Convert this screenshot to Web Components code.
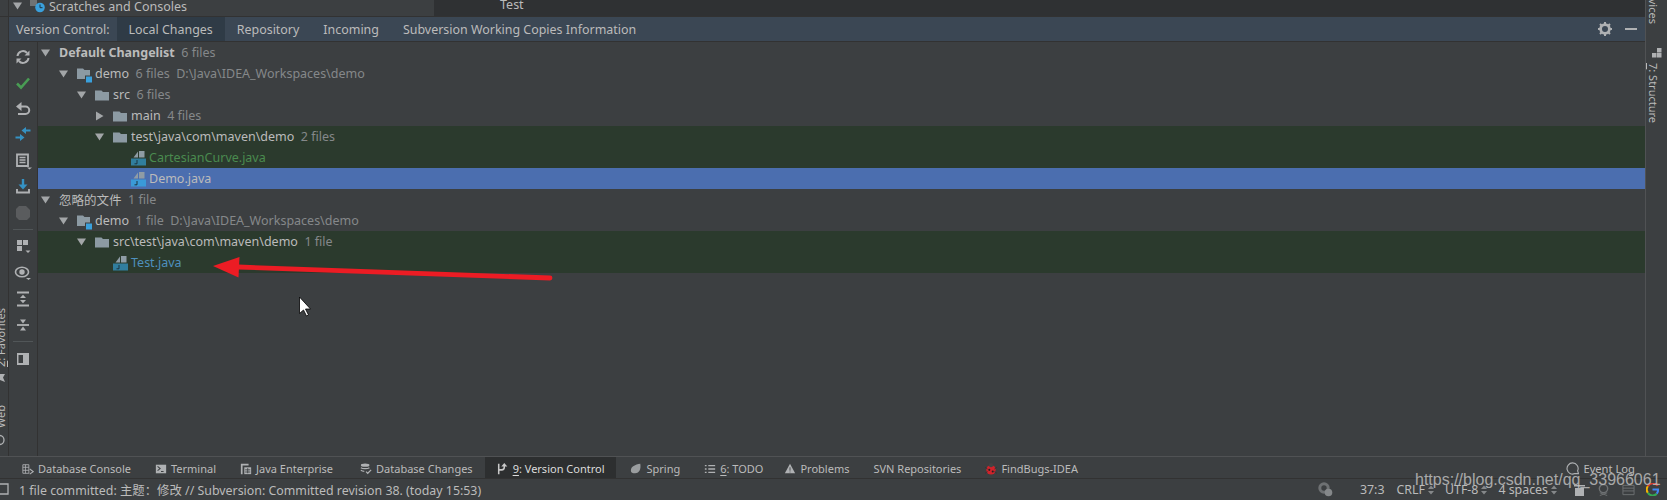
<!DOCTYPE html>
<html>
<head>
<meta charset="utf-8">
<style>
  html, body { margin: 0; padding: 0; background: #3c3f41; overflow: hidden; }
  body { width: 1667px; height: 500px; font-family: "Noto Sans", "Noto Sans CJK SC", sans-serif; font-size: 12.5px; color: #bbbbbb; }
</style>
</head>
<body>
<ide-window></ide-window>

<script>
// shared icon markup
const ICONS = {
  sync: '<path d="M2.500 7a5.500 5.500 0 0 1 9.600-3M13.500 9a5.500 5.500 0 0 1-9.600 3" fill="none" stroke="#afb1b3" stroke-width="2"/><path d="M14.500 1.500v5h-5zM1.500 14.500v-5h5z" fill="#afb1b3"/>',
  check: '<path d="M2 8.500l4 4 8-9" fill="none" stroke="#499c54" stroke-width="2.600"/>',
  undo: '<path d="M4 5.500h6.500a3.700 3.700 0 0 1 0 7.500H3" fill="none" stroke="#afb1b3" stroke-width="2"/><path d="M6.500 1v9L1 5.500z" fill="#afb1b3"/>',
  merge: '<path d="M15.500 3.500H10M.5 10.500H6" stroke="#3592c4" stroke-width="2.200" fill="none"/><path d="M11 0v7L6.500 3.500zM5 7v7l4.500-3.500z" fill="#3592c4"/>',
  comment: '<path d="M2 1.500h11v11.500H2z" fill="none" stroke="#afb1b3" stroke-width="1.800"/><path d="M4.500 4.500h6M4.500 7h6M4.500 9.500h6" stroke="#afb1b3" stroke-width="1.300"/><path d="M12 14.500h5l-2.500 2z" fill="#afb1b3"/>',
  shelve: '<path d="M8 0v7" stroke="#3592c4" stroke-width="2.400"/><path d="M3.500 5.500h9L8 10.500z" fill="#3592c4"/><path d="M2 10v3.500h12V10" fill="none" stroke="#afb1b3" stroke-width="1.900"/>',
  stop: '<path d="M4 1h7l4 4v7l-3 3H4l-3-3V4z" fill="#5a5c5e"/>',
  group: '<rect x="2" y="1" width="5" height="5" fill="#afb1b3"/><rect x="8" y="1" width="5" height="5" fill="#afb1b3"/><rect x="2" y="7" width="5" height="5" fill="#afb1b3"/><path d="M10.500 11.500h5l-2.500 2.500z" fill="#afb1b3"/>',
  eye: '<ellipse cx="7" cy="7" rx="6.500" ry="4.800" fill="none" stroke="#afb1b3" stroke-width="1.600"/><circle cx="7" cy="7" r="2.700" fill="#afb1b3"/><path d="M11 13h5l-2.500 2z" fill="#afb1b3"/>',
  expand: '<path d="M2 1.500h12M2 14.500h12" stroke="#afb1b3" stroke-width="1.800"/><path d="M8 3.800l3 3.200H5zM8 12.200L5 9h6z" fill="#afb1b3"/>',
  collapse: '<path d="M2 8h12" stroke="#afb1b3" stroke-width="1.800"/><path d="M8 6.500L5 2.500h6zM8 9.500l3 4H5z" fill="#afb1b3"/>',
  layout: '<rect x="2" y="2" width="12" height="12" fill="#afb1b3"/><rect x="3.500" y="4" width="4.500" height="8" fill="#3c3f41"/>'
};

const FOLDER = '<path d="M0 3.500h6.500L8 5h6v8.500H0z" fill="#8c9aa3"/>';

class ToolIcon extends HTMLElement {
  constructor() {
    super();
    this.attachShadow({mode: 'open'});
    const name = this.getAttribute('name');
    this.shadowRoot.innerHTML = `
      <style>
        :host { display: flex; width: 28px; height: 26px; align-items: center; justify-content: center; flex: none; }
        svg { width: 16px; height: 16px; overflow: visible; }
      </style>
      <svg viewBox="0 0 16 16">${ICONS[name]}</svg>`;
  }
}
customElements.define('tool-icon', ToolIcon);

// one row of the changes tree
class TreeRow extends HTMLElement {
  constructor() {
    super();
    this.attachShadow({mode: 'open'});
    const level = +this.getAttribute('level');
    const arrow = this.getAttribute('arrow');
    const icon = this.getAttribute('icon');
    let arrowSvg = '';
    if (arrow === 'down') arrowSvg = '<svg class="arrow" viewBox="0 0 10 10"><path d="M0 1.500h9L4.500 8.500z" fill="#a3a6a8"/></svg>';
    if (arrow === 'right') arrowSvg = '<svg class="arrow" viewBox="0 0 10 10"><path d="M1 .5v9L8.500 5z" fill="#a3a6a8"/></svg>';
    let iconSvg = '';
    if (icon === 'folder') iconSvg = `<svg class="icon" viewBox="0 0 16 16">${FOLDER}</svg>`;
    if (icon === 'module') iconSvg = `<svg class="icon" viewBox="0 0 16 16"><path d="M0 2.500h6L7.500 4H13v9H0z" fill="#8c9aa3"/><rect x="8" y="9.500" width="8" height="8" fill="#3c3f41"/><rect x="9" y="10.500" width="6" height="6" fill="#3aa0dc"/></svg>`;
    if (icon === 'java') iconSvg = `<svg class="icon" viewBox="0 0 16 16"><path d="M2.500 7.500L7 1.500v6z" fill="#8f9ca5"/><rect x="8" y="1" width="5.500" height="6.500" fill="#8f9ca5"/><rect x="0" y="8.500" width="15" height="7" fill="${this.getAttribute('tint')}"/><path d="M6 10v3.800H3.500" fill="none" stroke="#1d3440" stroke-width="1"/></svg>`;
    this.shadowRoot.innerHTML = `
      <style>
        :host { display: flex; height: 21px; align-items: center; white-space: pre; padding-left: ${level * 18 + 3}px; }
        :host([tone=green]) { background: #2b3a2d; }
        :host([tone=sel]) { background: #4b6eaf; }
        .slot { width: 18px; flex: none; display: flex; align-items: center; }
        .arrow { width: 10px; height: 10px; }
        .icon { width: 16px; height: 16px; flex: none; margin-right: 2px; overflow: visible; }
        .dim { color: #85888a; margin-left: 6.5px; }
        b { font-weight: 700; }
      </style>
      <span class="slot">${arrowSvg}</span>${iconSvg}<span class="name" style="color:${this.getAttribute('color') || 'inherit'}"><slot></slot></span><span class="dim">${this.getAttribute('info') || ''}</span><span class="dim">${this.getAttribute('path') || ''}</span>`;
  }
}
customElements.define('tree-row', TreeRow);

class ToolTab extends HTMLElement {
  constructor() {
    super();
    this.attachShadow({mode: 'open'});
    this.shadowRoot.innerHTML = `
      <style>
        :host { display: flex; align-items: center; gap: 4px; height: 100%; padding: 2px 12px 0; box-sizing: border-box; white-space: pre; font-size: 11px; flex: none; }
        :host([on]) { background: #2d2f30; color: #dcdcdc; }
        ::slotted(svg) { width: 12px; height: 12px; flex: none; }
        span { display: block; }
      </style>
      <slot name="icon"></slot><span><slot></slot></span>`;
  }
}
customElements.define('tool-tab', ToolTab);

class IdeWindow extends HTMLElement {
  constructor() {
    super();
    this.attachShadow({mode: 'open'});
    this.shadowRoot.innerHTML = `
      <style>
        :host { display: flex; flex-direction: column; width: 1667px; height: 500px; position: relative; overflow: hidden; background: #3c3f41; }
        * { box-sizing: border-box; }
        .upper { flex: 1; display: flex; min-height: 0; }
        .work { flex: 1; display: flex; flex-direction: column; min-width: 0; }
        .top { height: 17px; flex: none; display: flex; border-bottom: 1px solid #323232; overflow: hidden; }
        .top .edge { width: 9px; flex: none; border-right: 1px solid #323232; }
        .top .tree { width: 425px; flex: none; display: flex; align-items: center; padding: 0 0 4px 4px; white-space: pre; }
        .top .ed { flex: 1; background: #2f3133; padding-left: 66px; line-height: 10px; }
        .main { flex: 1; display: flex; min-height: 0; }
        .left { width: 9px; flex: none; border-right: 1px solid #323232; position: relative; overflow: hidden; }
        .right { width: 22px; flex: none; border-left: 1px solid #505254; position: relative; overflow: hidden; }
        .panel { flex: 1; display: flex; flex-direction: column; min-width: 0; }
        .tabs { height: 25px; flex: none; display: flex; align-items: center; background: #3b4754; border-bottom: 1px solid #323232; white-space: pre; font-size: 12.45px; }
        .tabs .title { padding: 0 7px 0 7px; }
        .tabs .tab { height: 100%; display: flex; align-items: center; padding: 0 12px; }
        .tabs .tab.on { background: #2f3b46; }
        .tabs .end { margin-left: auto; display: flex; align-items: center; gap: 13px; padding-right: 8px; }
        .body { flex: 1; display: flex; min-height: 0; }
        .bar { width: 29px; flex: none; border-right: 1px solid #323232; padding-top: 2px; display: flex; flex-direction: column; }
        .sep { height: 1px; margin: 3px 4px 4px; background: #515658; flex: none; }
        .tree-area { flex: 1; min-width: 0; }
        .bottom { height: 22px; flex: none; display: flex; align-items: center; border-top: 1px solid #505254; padding-left: 10px; }
        .bottom .end { margin-left: auto; padding: 2px 32px 0 0; display: flex; align-items: center; gap: 4px; font-size: 11.2px; }
        .status { height: 22px; flex: none; display: flex; align-items: center; border-top: 1px solid #323232; white-space: pre; font-size: 12.38px; }
        .status .end { margin-left: auto; display: flex; align-items: center; white-space: pre; }
        .status .spin { margin-left: 3px; width: 6px; height: 10px; flex: none; }
        .vtext { position: absolute; white-space: pre; transform-origin: 0 0; font-size: 11px; line-height: 17px; }
        .mark { position: absolute; color: #c4c4c4; font: 16px "Liberation Sans", sans-serif; white-space: pre; left: 1415px; top: 471px; opacity: .8; }
        .arrow-ann { position: absolute; left: 0; top: 0; pointer-events: none; }
        u { text-underline-offset: 2px; }
      </style>

      <div class="upper">
        <div class="work">
          <div class="top">
            <div class="edge"></div>
            <div class="tree">
              <svg width="10" height="10" viewBox="0 0 10 10" style="flex:none"><path d="M0 1.500h9L4.500 8.500z" fill="#a3a6a8"/></svg>
              <svg width="16" height="14" viewBox="0 0 16 14" style="margin-left:7px;flex:none"><path d="M0 0h7v7H0z" fill="#6f7375"/><circle cx="10" cy="8.500" r="4.800" fill="#3aa0dc"/><path d="M10 5.500v3.200h2.500" stroke="#1d3440" fill="none"/></svg>
              <span style="margin-left:3px">Scratches and Consoles</span>
            </div>
            <div class="ed">Test</div>
          </div>

          <div class="main">
            <div class="left">
              <span class="vtext" style="left:-8.500px;top:350px;transform:rotate(-90deg)"><u>2</u>: Favorites</span>
              <svg class="vtext" style="left:0;top:357px" width="6" height="11" viewBox="0 0 6 11"><path d="M-4 0H5L3 3.500 5 8 0 6l-4 3z" fill="#afb1b3"/></svg>
              <span class="vtext" style="left:-8.500px;top:411px;transform:rotate(-90deg)">Web</span>
              <svg class="vtext" style="left:0;top:417px" width="6" height="12" viewBox="0 0 6 12"><circle cx="-.5" cy="6" r="4.500" fill="none" stroke="#afb1b3" stroke-width="1.300"/></svg>
            </div>
            <div class="panel">
              <div class="tabs">
                <span class="title">Version Control:</span>
                <span class="tab on">Local Changes</span>
                <span class="tab">Repository</span>
                <span class="tab">Incoming</span>
                <span class="tab">Subversion Working Copies Information</span>
                <span class="end">
                  <svg width="14" height="14" viewBox="0 0 14 14"><circle cx="7" cy="7" r="4.400" fill="none" stroke="#afb1b3" stroke-width="2.800"/><path d="M7 0v2.500M7 11.500V14M0 7h2.500M11.500 7H14M2 2l2 2M10 10l2 2M12 2l-2 2M4 10l-2 2" stroke="#afb1b3" stroke-width="2"/></svg>
                  <span style="width:12px;height:2px;background:#afb1b3"></span>
                </span>
              </div>
              <div class="body">
                <div class="bar">
                  <tool-icon name="sync"></tool-icon>
                  <tool-icon name="check"></tool-icon>
                  <tool-icon name="undo"></tool-icon>
                  <tool-icon name="merge"></tool-icon>
                  <tool-icon name="comment"></tool-icon>
                  <tool-icon name="shelve"></tool-icon>
                  <tool-icon name="stop"></tool-icon>
                  <div class="sep"></div>
                  <tool-icon name="group"></tool-icon>
                  <tool-icon name="eye"></tool-icon>
                  <tool-icon name="expand"></tool-icon>
                  <tool-icon name="collapse"></tool-icon>
                  <div class="sep"></div>
                  <tool-icon name="layout"></tool-icon>
                </div>
                <div class="tree-area">
                  <tree-row level="0" arrow="down" info="6 files"><b>Default Changelist</b></tree-row>
                  <tree-row level="1" arrow="down" icon="module" info="6 files" path="D:\\Java\\IDEA_Workspaces\\demo">demo</tree-row>
                  <tree-row level="2" arrow="down" icon="folder" info="6 files">src</tree-row>
                  <tree-row level="3" arrow="right" icon="folder" info="4 files">main</tree-row>
                  <tree-row level="3" arrow="down" icon="folder" info="2 files" tone="green">test\\java\\com\\maven\\demo</tree-row>
                  <tree-row level="4" icon="java" tone="green" tint="#317e9e" color="#4a8b4f">CartesianCurve.java</tree-row>
                  <tree-row level="4" icon="java" tone="sel" tint="#3a9ad8">Demo.java</tree-row>
                  <tree-row level="0" arrow="down" info="1 file">忽略的文件</tree-row>
                  <tree-row level="1" arrow="down" icon="module" info="1 file" path="D:\\Java\\IDEA_Workspaces\\demo">demo</tree-row>
                  <tree-row level="2" arrow="down" icon="folder" info="1 file" tone="green">src\\test\\java\\com\\maven\\demo</tree-row>
                  <tree-row level="3" icon="java" tone="green" tint="#317e9e" color="#4e90bd">Test.java</tree-row>
                </div>
              </div>
            </div>
          </div>
        </div>
        <div class="right">
          <span class="vtext" style="left:16px;top:-18px;transform:rotate(90deg)">Services</span>
          <svg class="vtext" style="left:6px;top:48px" width="10" height="10" viewBox="0 0 10 10"><rect x="5" y="0" width="4.500" height="4.500" fill="#afb1b3"/><rect x="0" y="5" width="4.500" height="4.500" fill="#afb1b3"/><rect x="5" y="5" width="4.500" height="4.500" fill="#afb1b3"/></svg>
          <span class="vtext" style="left:16px;top:63px;transform:rotate(90deg)"><u>7</u>: Structure</span>
        </div>
      </div>

      <div class="bottom">
        <tool-tab><svg slot="icon" viewBox="0 0 14 14"><path d="M1 2h7v10H1zM1 5h7M1 8.500h7M4 2v10" fill="none" stroke="#afb1b3"/><path d="M9 7l4 3-4 3" fill="none" stroke="#afb1b3" stroke-width="1.300"/></svg>Database Console</tool-tab>
        <tool-tab><svg slot="icon" viewBox="0 0 14 14"><rect x="1" y="2" width="12" height="10" fill="#afb1b3"/><path d="M3 4l3 2.500L3 9M7 10h3" fill="none" stroke="#3c3f41" stroke-width="1.200"/></svg>Terminal</tool-tab>
        <tool-tab><svg slot="icon" viewBox="0 0 14 14"><path d="M1 1h9v2H3v10H1z" fill="#afb1b3"/><rect x="5" y="5" width="8" height="8" fill="#afb1b3"/><path d="M6 8h6M6 10.500h6M9 6v6" stroke="#3c3f41"/></svg>Java Enterprise</tool-tab>
        <tool-tab style="margin-left:3px"><svg slot="icon" viewBox="0 0 14 14"><ellipse cx="6" cy="2.500" rx="5" ry="1.800" fill="#afb1b3"/><path d="M1 5.500c2 1.500 8 1.500 10 0M1 8.500c1 .8 3 1.200 4 1.200" fill="none" stroke="#afb1b3" stroke-width="1.400"/><path d="M7 10l2 2 4-4" fill="none" stroke="#afb1b3" stroke-width="1.400"/></svg>Database Changes</tool-tab>
        <tool-tab on><svg slot="icon" viewBox="0 0 14 14"><path d="M2 1v12M2 8h3.500a3 3 0 0 0 3-3V3" fill="none" stroke="#c8c8c8" stroke-width="1.800"/><path d="M8.500 0l3.500 4H5z" fill="#c8c8c8"/></svg><u>9</u>: Version Control</tool-tab>
        <tool-tab style="margin-left:2px"><svg slot="icon" viewBox="0 0 14 14"><path d="M1 9c0-5 5-7 11-8 1 6-1 11-6 11-3 0-5-1-5-3z" fill="#9a9d9f"/></svg>Spring</tool-tab>
        <tool-tab><svg slot="icon" viewBox="0 0 14 14"><path d="M5 3h8M5 7h8M5 11h8" stroke="#afb1b3" stroke-width="1.500"/><path d="M1 3h2M1 7h2M1 11h2" stroke="#afb1b3" stroke-width="1.500"/></svg><u>6</u>: TODO</tool-tab>
        <tool-tab style="margin-left:-3px"><svg slot="icon" viewBox="0 0 14 14"><path d="M7 1l6 11H1z" fill="#afb1b3"/><path d="M7 5v4M7 10v1" stroke="#3c3f41"/></svg>Problems</tool-tab>
        <tool-tab>SVN Repositories</tool-tab>
        <tool-tab><svg slot="icon" viewBox="0 0 14 14"><circle cx="7" cy="8" r="5.500" fill="#d0232b"/><circle cx="7" cy="2.500" r="2.500" fill="#444"/><path d="M0 5l3 2M14 5l-3 2M0 12l3-2M14 12l-3-2" stroke="#333"/><circle cx="5" cy="8" r="1.200" fill="#222"/><circle cx="9" cy="10" r="1.200" fill="#222"/></svg>FindBugs-IDEA</tool-tab>
        <span class="end">
          <svg width="13" height="13" viewBox="0 0 14 14"><path d="M7 1a6 6 0 1 0 2.500 11.500h4L12.500 9.500A6 6 0 0 0 7 1z" fill="none" stroke="#afb1b3" stroke-width="1.200"/></svg>
          <span>Event Log</span>
        </span>
      </div>

      <div class="status">
        <svg width="9" height="13" viewBox="0 0 9 13" style="flex:none"><path d="M-3 1h11v10H-3" fill="none" stroke="#afb1b3" stroke-width="1.300"/></svg>
        <span style="margin-left:10px">1 file committed: 主题：修改 // Subversion: Committed revision 38. (today 15:53)</span>
        <span class="end">
          <svg width="15" height="15" viewBox="0 0 15 15" style="margin-right:27px"><circle cx="6" cy="6" r="4.200" fill="none" stroke="#6e7173" stroke-width="3"/><circle cx="10.500" cy="10.500" r="3.800" fill="#85888a"/></svg>
          <span>37:3</span>
          <span style="margin-left:12px">CRLF</span><svg class="spin" viewBox="0 0 6 10"><path d="M0 4l3-3.500L6 4zM0 6l3 3.500L6 6z" fill="#85888a"/></svg>
          <span style="margin-left:11px">UTF-8</span><svg class="spin" viewBox="0 0 6 10"><path d="M0 4l3-3.500L6 4zM0 6l3 3.500L6 6z" fill="#85888a"/></svg>
          <span style="margin-left:11px">4 spaces</span><svg class="spin" viewBox="0 0 6 10"><path d="M0 4l3-3.500L6 4zM0 6l3 3.500L6 6z" fill="#85888a"/></svg>
          <svg width="11" height="12" viewBox="0 0 11 12" style="margin-left:17px"><path d="M0 1h11v1.500H0zM1 4h9v8H1z" fill="#afb1b3"/></svg>
          <svg width="13" height="14" viewBox="0 0 14 14" style="margin-left:12px"><circle cx="7" cy="5.500" r="4.500" fill="none" stroke="#6e7173" stroke-width="1.500"/><path d="M3 13l8-3M11 13l-8-3" stroke="#6e7173"/></svg>
          <svg width="13" height="12" viewBox="0 0 14 12" style="margin-left:12px"><path d="M1 1h12v10H1zM1 4h12M1 7h12" fill="none" stroke="#6e7173"/></svg>
          <svg width="13" height="13" viewBox="0 0 14 14" style="margin:0 8px 0 11px"><path d="M12.500 3A6 6 0 0 0 2 3.500" fill="none" stroke="#d93a2b" stroke-width="2.200"/><path d="M2 3.500a6 6 0 0 0 0 7" fill="none" stroke="#f4b400" stroke-width="2.200"/><path d="M2 10.500a6 6 0 0 0 9.500 1" fill="none" stroke="#34a853" stroke-width="2.200"/><path d="M7 7h6a6 6 0 0 1-1.500 4.500" fill="none" stroke="#4285f4" stroke-width="2.200"/></svg>
        </span>
      </div>

      <svg class="arrow-ann" width="1667" height="500" viewBox="0 0 1667 500">
        <path d="M550 278L238 267" stroke="#ec1c24" stroke-width="4.800" stroke-linecap="round"/>
        <path d="M213 266L239.500 257L238.500 277.500z" fill="#ec1c24"/>
        <path d="M299.500 297v16.500l4-3.500 3 6 2-1-3-6h5z" fill="#fff" stroke="#000" stroke-width=".8"/>
      </svg>
      <span class="mark">https://blog.csdn.net/qq_33966061</span>
    `;
  }
}
customElements.define('ide-window', IdeWindow);
</script>
</body>
</html>
